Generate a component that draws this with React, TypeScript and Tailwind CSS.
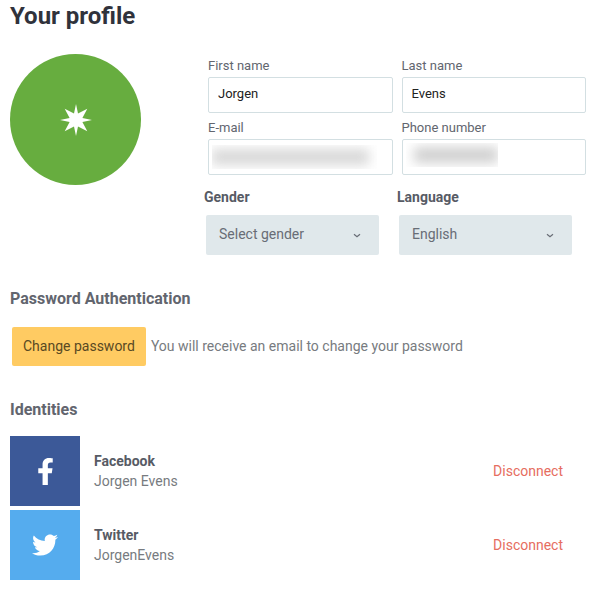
import React, { useState } from 'react';
import { FaFacebookF, FaTwitter } from 'react-icons/fa';

interface TextFieldProps {
  id: string;
  label: string;
  type?: string;
  defaultValue?: string;
  children?: React.ReactNode;
}

const TextField: React.FC<TextFieldProps> = ({ id, label, type = 'text', defaultValue, children }) => (
  <div>
    <label htmlFor={id} className="block text-[13px] leading-[22px] text-[#62666f]">{label}</label>
    <div className="relative">
      <input
        id={id}
        type={type}
        defaultValue={defaultValue}
        className="block h-9 w-full rounded-xs border border-[#d3dfe2] bg-white px-[9px] pb-1 text-[13px] text-[#222] outline-none"
      />
      {children}
    </div>
  </div>
);

interface SelectFieldProps {
  id: string;
  label: string;
  options: string[];
}

const SelectField: React.FC<SelectFieldProps> = ({ id, label, options }) => {
  const [value, setValue] = useState(options[0]);

  return (
    <div>
      <label htmlFor={id} className="block text-sm leading-5 font-bold text-[#575b65]">{label}</label>
      <div className="relative mt-2 mr-[18px] ml-0.5">
        <select
          id={id}
          value={value}
          onChange={(e) => setValue(e.target.value)}
          className="block h-10 w-full appearance-none rounded-xs bg-[#e0e8eb] px-[13px] pb-0.5 text-sm text-[#686d76] outline-none"
        >
          {options.map((option) => (
            <option key={option}>{option}</option>
          ))}
        </select>
        <svg className="pointer-events-none absolute top-[18px] right-[18px] h-1.5 w-2" viewBox="0 0 8 6" fill="none" stroke="#686d76" strokeWidth="1.2">
          <path d="M1 1.2 4 3.8 7 1.2" />
        </svg>
      </div>
    </div>
  );
};

interface IdentityRowProps {
  name: string;
  account: string;
  tileClass: string;
  icon: React.ReactNode;
}

const IdentityRow: React.FC<IdentityRowProps> = ({ name, account, tileClass, icon }) => (
  <li className="flex items-center pr-[23px]">
    <div className={`flex h-[70px] w-[70px] items-center justify-center text-white ${tileClass}`}>{icon}</div>
    <div className="ml-3.5 flex-1 text-sm leading-5">
      <p className="font-bold text-[#575b65]">{name}</p>
      <p className="text-[#777b80]">{account}</p>
    </div>
    <button type="button" className="text-sm text-[#e66d60]">Disconnect</button>
  </li>
);

export default function App() {
  return (
    <main className="bg-white pr-3.5 pb-2 pl-2.5 font-['Roboto','Noto_Sans',sans-serif]">
      <h1 className="text-2xl leading-8 font-bold text-[#30323b]">Your profile</h1>

      <div className="mt-[22px] flex items-start">
        <div className="flex h-[131px] w-[131px] shrink-0 items-center justify-center rounded-full bg-[#67ad3f]">
          <svg className="h-8 w-8" viewBox="0 0 32 32" fill="#fff">
            <path d="M16 0 18 9.6 27.3 4.7 22.4 14 32 16 22.4 18 27.3 27.3 18 22.4 16 32 14 22.4 4.7 27.3 9.6 18 0 16 9.6 14 4.7 4.7 14 9.6Z" />
          </svg>
        </div>

        <form className="mt-px ml-[63px] flex-1">
          <div className="ml-1 grid grid-cols-2 gap-x-[9px] gap-y-1">
            <TextField id="first-name" label="First name" defaultValue="Jorgen" />
            <TextField id="last-name" label="Last name" defaultValue="Evens" />
            <TextField id="email" label="E-mail" type="email">
              {/* Private values stay obscured */}
              <div className="pointer-events-none absolute top-1.5 right-4 left-1 h-6 overflow-hidden">
                <div className="mt-1 mr-2 h-4 bg-[#d8d8d8] blur-[6px]" />
              </div>
            </TextField>
            <TextField id="phone" label="Phone number" type="tel">
              <div className="pointer-events-none absolute top-1 left-1 h-6 w-[92px] overflow-hidden">
                <div className="mt-1 ml-2 h-4 bg-[#d0d0d0] blur-[6px]" />
              </div>
            </TextField>
          </div>
          <div className="mt-3 -mr-1 grid grid-cols-2">
            <SelectField id="gender" label="Gender" options={['Select gender', 'Female', 'Male']} />
            <SelectField id="language" label="Language" options={['English', 'Nederlands', 'Français']} />
          </div>
        </form>
      </div>

      <section className="mt-8">
        <h2 className="text-base leading-6 font-bold text-[#62656e]">Password Authentication</h2>
        <div className="mt-4 ml-0.5 flex items-center gap-[5px]">
          <button type="button" className="h-[39px] rounded-xs bg-[#ffcb62] px-[11px] pb-0.5 text-sm text-[#594923]">Change password</button>
          <p className="pb-0.5 text-sm text-[#777b80]">You will receive an email to change your password</p>
        </div>
      </section>

      <section className="mt-8">
        <h2 className="text-base leading-6 font-bold text-[#62656e]">Identities</h2>
        <ul className="mt-3.5 space-y-1">
          <IdentityRow name="Facebook" account="Jorgen Evens" tileClass="bg-[#3c5998]" icon={<FaFacebookF size={27} />} />
          <IdentityRow name="Twitter" account="JorgenEvens" tileClass="bg-[#55acee]" icon={<FaTwitter size={26} />} />
        </ul>
      </section>
    </main>
  );
}
